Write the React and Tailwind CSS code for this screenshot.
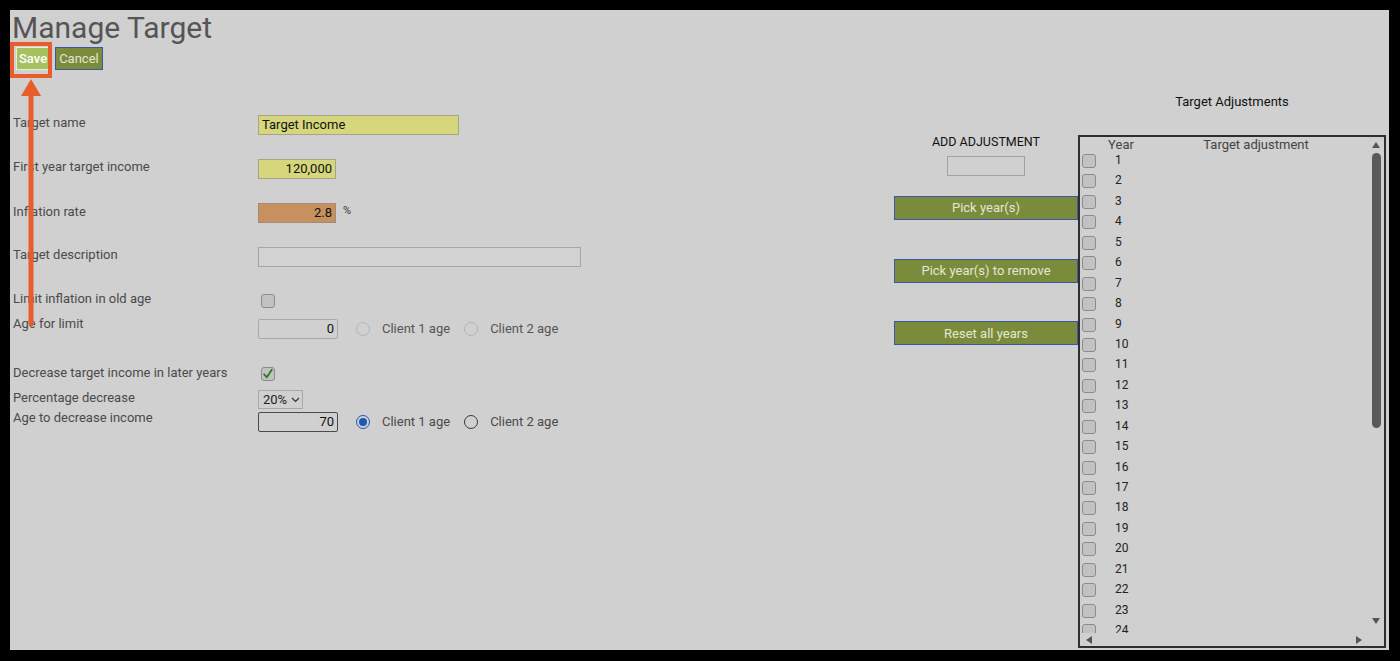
import React from 'react';

const font = { fontFamily: 'Roboto, "Liberation Sans", sans-serif' };

const Check = ({ checked, className = '' }) => (
  <div className={`w-[14px] h-[14px] rounded-[3px] border border-[#8c8c8c] bg-[#c2c2c2] flex items-center justify-center ${className}`}>
    {checked && (
      <svg width="12" height="12" viewBox="0 0 12 12">
        <path d="M2.2 6.4 L4.8 9.3 L9.8 1.8" fill="none" stroke="#2f7d1e" strokeWidth="1.9" strokeLinecap="round" strokeLinejoin="round" />
      </svg>
    )}
  </div>
);

const Radio = ({ state }) => {
  if (state === 'on')
    return (
      <div className="w-[14px] h-[14px] rounded-full border-[1.5px] border-[#1d58b8] flex items-center justify-center">
        <div className="w-[8px] h-[8px] rounded-full bg-[#1d58b8]" />
      </div>
    );
  if (state === 'off')
    return <div className="w-[14px] h-[14px] rounded-full border-[1.5px] border-[#3a3a3a]" />;
  return <div className="w-[14px] h-[14px] rounded-full border border-[#b4b4b4]" />;
};

// top: gap above row, lt / ct: label and control offsets inside the row
const Row = ({ label, top, lt = 0, ct = 0, children }) => (
  <div className="flex items-start" style={{ marginTop: top }}>
    <div className="w-[245px] text-[13px] leading-[16px] text-[#4a4a4a]" style={{ marginTop: lt }}>{label}</div>
    <div className="flex items-center" style={{ marginTop: ct }}>{children}</div>
  </div>
);

const RadioPair = ({ first, second, dim }) => (
  <div className={`flex items-center text-[13px] ${dim ? 'text-[#555]' : 'text-[#4a4a4a]'}`}>
    <div className="ml-[18px]"><Radio state={first} /></div>
    <span className="ml-[12px]">Client 1 age</span>
    <div className="ml-[14px]"><Radio state={second} /></div>
    <span className="ml-[12px]">Client 2 age</span>
  </div>
);

const OliveBtn = ({ children }) => (
  <button className="w-full h-[24px] bg-[#7a8c3b] border border-[#3e56a8] text-[#e3e7d3] text-[13px]">
    {children}
  </button>
);

const Tri = ({ dir }) => {
  const pts = {
    up: '1,8 5,2 9,8',
    down: '1,2 5,8 9,2',
    left: '8,1 2,5 8,9',
    right: '2,1 8,5 2,9',
  }[dir];
  return (
    <svg width="10" height="10" viewBox="0 0 10 10">
      <polygon points={pts} fill="#555" />
    </svg>
  );
};

const years = Array.from({ length: 24 }, (_, i) => i + 1);

export default function App() {
  return (
    <div className="relative w-[1400px] h-[661px] bg-black p-[10px] pr-[11px] pb-[11px]" style={font}>
      <div className="h-full bg-[#d0d0d0] flex flex-col">
        <h1 className="text-[30px] leading-[30px] text-[#555] mt-[3px] pl-[2px]">Manage Target</h1>
        <div className="flex mt-[4px] ml-[6px] gap-[5px]">
          <button className="h-[23px] px-[2px] bg-[#a6c260] text-white text-[13px] font-medium border border-[#e8eed8]">Save</button>
          <button className="h-[23px] px-[3px] bg-[#7a8c3b] border border-[#3e56a8] text-[#e3e7d3] text-[13px]">Cancel</button>
        </div>

        <div className="flex mt-[20px] flex-1">
          {/* form */}
          <div className="w-[884px] pl-[3px] pt-[25px] flex flex-col">
            <Row label="Target name" top={0}>
              <div className="w-[201px] h-[20px] bg-[#d6d67c] border border-[#a4a48a] text-[13px] text-[#111] pl-[3px] leading-[18px]">Target Income</div>
            </Row>
            <Row label="First year target income" top={24}>
              <div className="w-[78px] h-[20px] bg-[#d6d67c] border border-[#a4a48a] text-[13px] text-[#111] pr-[3px] text-right leading-[18px]">120,000</div>
            </Row>
            <Row label="Inflation rate" top={24} lt={1}>
              <div className="w-[78px] h-[20px] bg-[#c6905f] border border-[#a58a78] text-[13px] text-[#111] pr-[3px] text-right leading-[18px]">2.8</div>
              <span className="ml-[7px] text-[11px] text-[#333] -mt-[3px]">%</span>
            </Row>
            <Row label="Target description" top={24}>
              <div className="w-[323px] h-[20px] border border-[#a6a6a6] bg-[#d2d2d2]" />
            </Row>
            <Row label="Limit inflation in old age" top={24} ct={3}>
              <Check className="ml-[3px]" />
            </Row>
            <Row label="Age for limit" top={8} ct={3}>
              <div className="w-[80px] h-[20px] border border-[#a8a8a8] rounded-[2px] text-[13px] text-[#111] pr-[3px] text-right leading-[18px]">0</div>
              <RadioPair first="dis" second="dis" dim />
            </Row>
            <Row label="Decrease target income in later years" top={26} ct={2}>
              <Check checked className="ml-[3px]" />
            </Row>
            <Row label="Percentage decrease" top={9}>
              <div className="w-[45px] h-[19px] border border-[#a8a8a8] text-[13px] text-[#222] flex items-center pl-[4px] gap-[4px]">
                20%
                <svg width="9" height="6" viewBox="0 0 9 6"><path d="M1 1 L4.5 4.5 L8 1" fill="none" stroke="#333" strokeWidth="1.2" /></svg>
              </div>
            </Row>
            <Row label="Age to decrease income" top={1} ct={2}>
              <div className="w-[80px] h-[20px] border border-[#4a4a4a] rounded-[2px] text-[13px] text-[#111] pr-[3px] text-right leading-[18px]">70</div>
              <RadioPair first="on" second="off" />
            </Row>
          </div>

          {/* add adjustment */}
          <div className="w-[184px] pt-[44px] flex flex-col items-center">
            <div className="text-[12.5px] leading-[16px] text-[#111]">ADD ADJUSTMENT</div>
            <div className="w-[78px] h-[20px] mt-[6px] border border-[#a2a2a2]" />
            <div className="w-full mt-[19px]"><OliveBtn>Pick year(s)</OliveBtn></div>
            <div className="w-full mt-[38px]"><OliveBtn>Pick year(s) to remove</OliveBtn></div>
            <div className="w-full mt-[38px]"><OliveBtn>Reset all years</OliveBtn></div>
          </div>

          {/* adjustments table */}
          <div className="w-[310px] pt-[4px] flex flex-col">
            <div className="w-[308px] text-center text-[13px] leading-[16px] text-[#111]">Target Adjustments</div>
            <div className="w-[308px] h-[513px] mt-[25px] border-2 border-[#2e2e2e] flex flex-col">
              <div className="flex flex-1 min-h-0">
                <div className="flex-1 flex flex-col overflow-hidden">
                  <div className="flex text-[13px] leading-[16px] text-[#444] shrink-0">
                    <div className="w-[18px]" />
                    <div className="w-[46px] text-center">Year</div>
                    <div className="flex-1 text-center">Target adjustment</div>
                  </div>
                  <div className="flex-1 overflow-hidden">
                    {years.map((y) => (
                      <div key={y} className="flex items-start h-[20.45px]">
                        <Check className="ml-[2px] mt-[1px]" />
                        <span className="ml-[19px] text-[12px] leading-[14px] text-[#222]">{y}</span>
                      </div>
                    ))}
                  </div>
                </div>
                <div className="w-[16px] flex flex-col items-center pt-[3px] pb-[7px]">
                  <Tri dir="up" />
                  <div className="w-[9px] h-[275px] mt-[3px] rounded-full bg-[#5a5a5a]" />
                  <div className="flex-1" />
                  <Tri dir="down" />
                </div>
              </div>
              <div className="h-[13px] flex items-center justify-between px-[4px] pr-[20px] shrink-0">
                <Tri dir="left" />
                <Tri dir="right" />
              </div>
            </div>
          </div>
        </div>
      </div>

      {/* annotation */}
      <div className="absolute left-[10px] top-[42px] w-[42px] h-[36px] border-[4px] border-[#e85d2c]" />
      <svg className="absolute left-[18px] top-[78px]" width="26" height="252" viewBox="0 0 26 252">
        <polygon points="13,1 23,18 3,18" fill="#e85d2c" />
        <line x1="13" y1="16" x2="13" y2="246" stroke="#e85d2c" strokeWidth="5" strokeLinecap="round" />
      </svg>
    </div>
  );
}
